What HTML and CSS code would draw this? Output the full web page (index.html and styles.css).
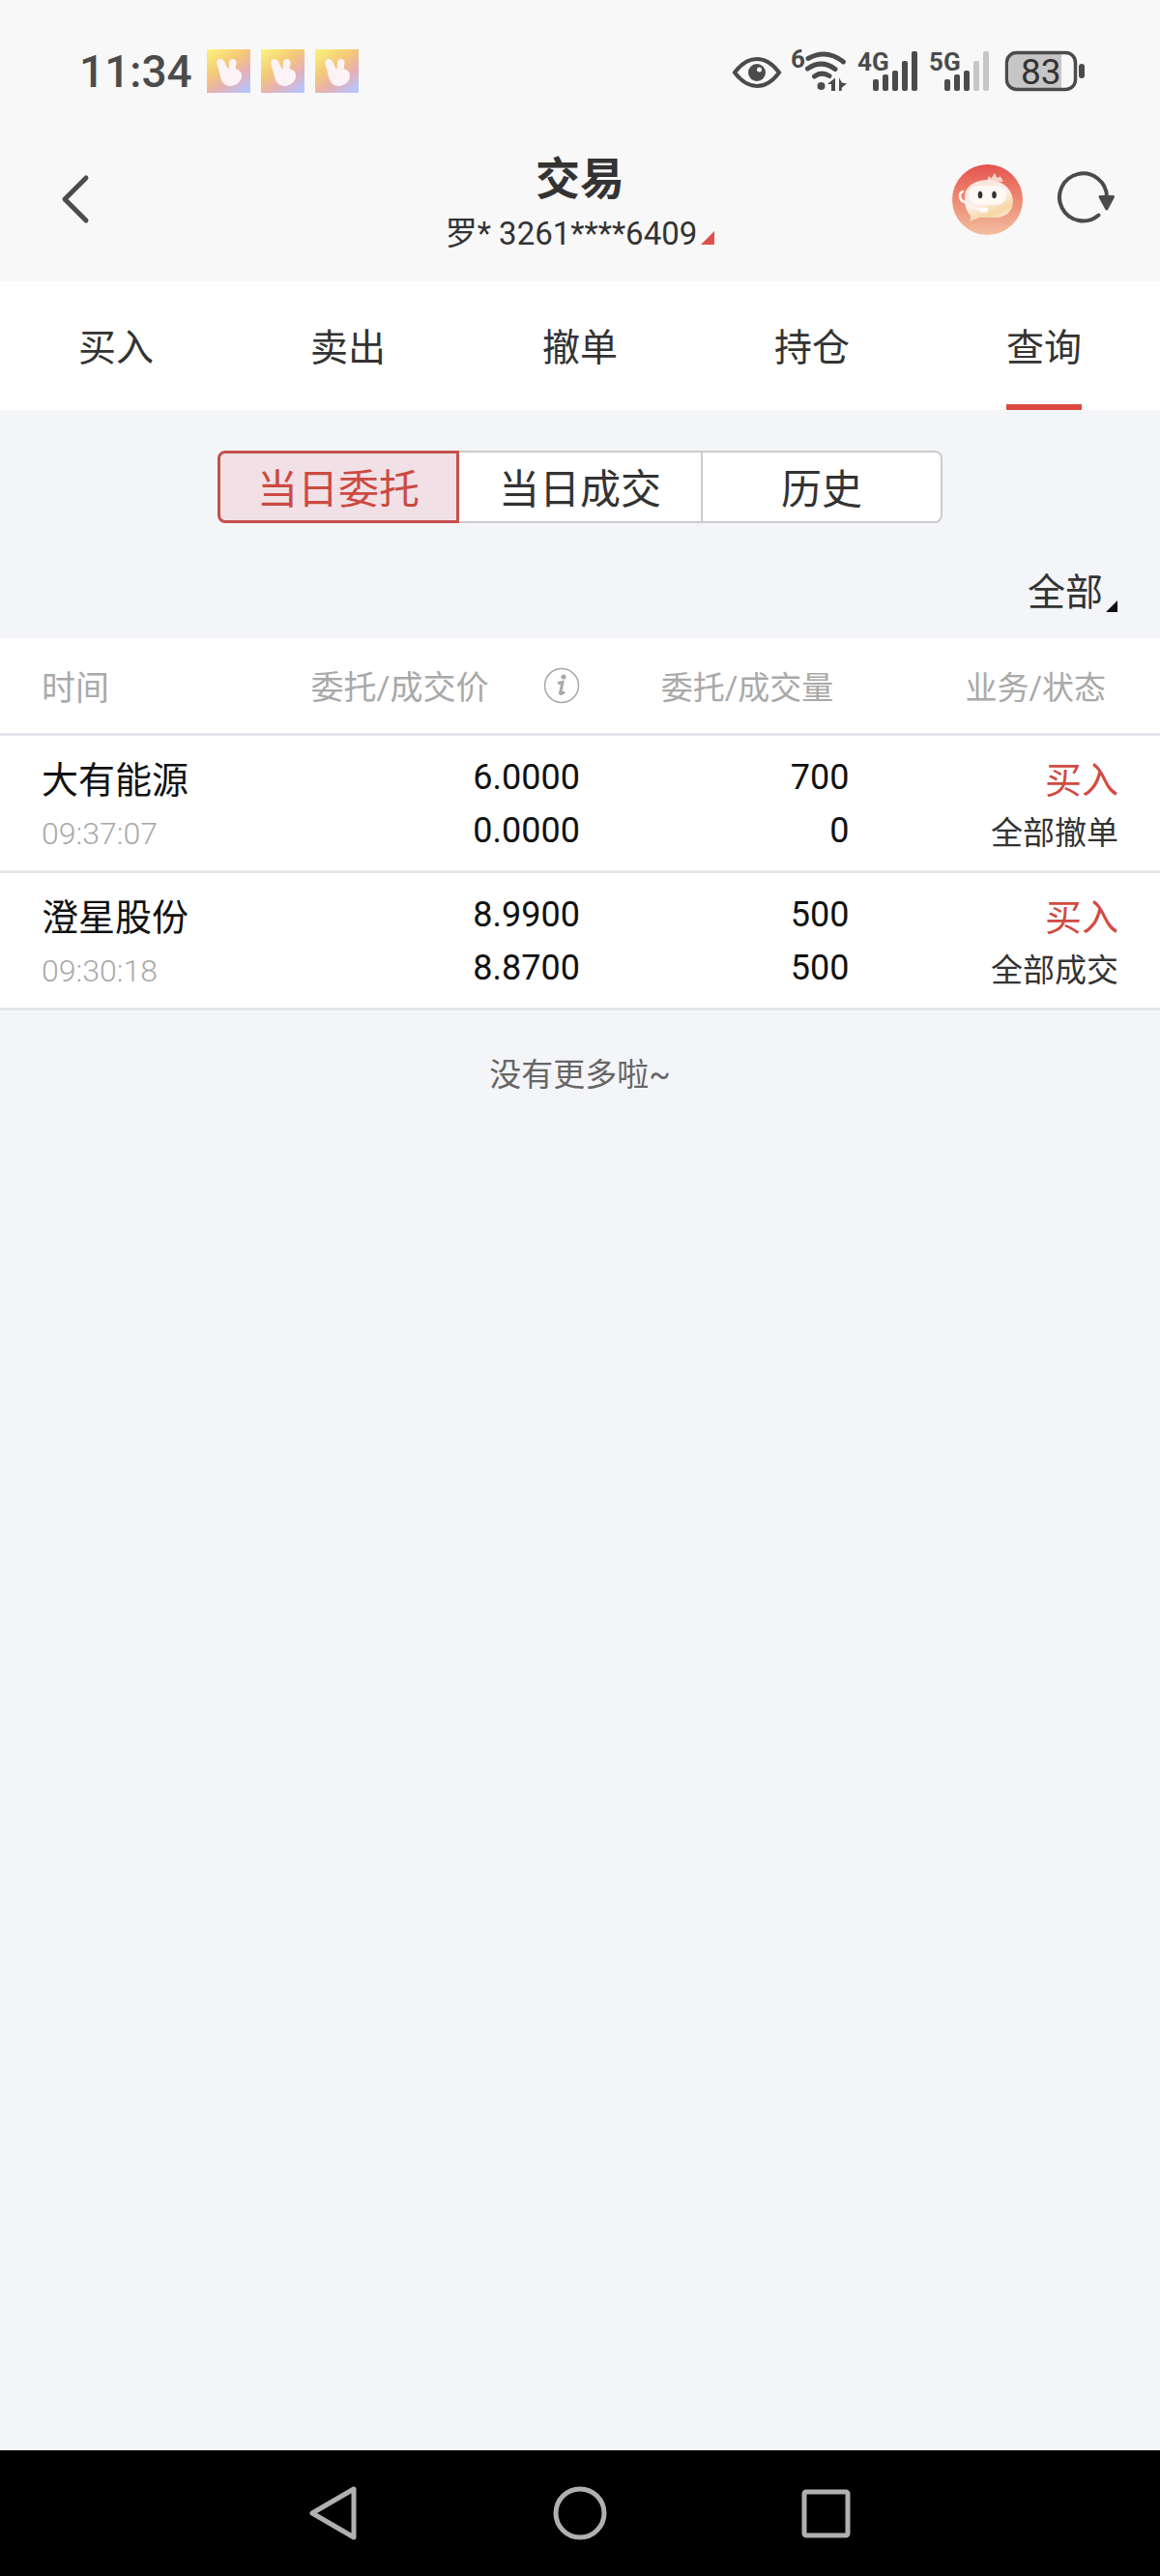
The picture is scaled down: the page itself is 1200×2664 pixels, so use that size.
FILE: index.html
```html
<!DOCTYPE html>
<html lang="zh-CN">
<head>
    <meta charset="UTF-8">
    <meta name="viewport" content="width=device-width, initial-scale=1.0">
    <title>交易</title>
    <link rel="stylesheet" href="styles.css">
</head>
<body>
    <!-- shared shapes -->
    <svg class="defs" width="0" height="0" aria-hidden="true">
        <defs>
            <linearGradient id="rabbit-bg" x1="0.1" y1="0" x2="0.8" y2="1">
                <stop offset="0" stop-color="#fbf07c"/>
                <stop offset="0.4" stop-color="#f4c878"/>
                <stop offset="0.7" stop-color="#e6b0b4"/>
                <stop offset="1" stop-color="#b9c4fb"/>
            </linearGradient>
            <linearGradient id="avatar-bg" x1="0" y1="0" x2="0" y2="1">
                <stop offset="0" stop-color="#e4544f"/>
                <stop offset="0.5" stop-color="#ec8a72"/>
                <stop offset="1" stop-color="#f3bd9f"/>
            </linearGradient>
            <linearGradient id="avatar-body" x1="0.2" y1="0" x2="0.7" y2="1">
                <stop offset="0" stop-color="#fbe3dd"/>
                <stop offset="0.5" stop-color="#fdeee6"/>
                <stop offset="0.8" stop-color="#f6d7a4"/>
                <stop offset="1" stop-color="#fbeadf"/>
            </linearGradient>
            <symbol id="rabbit" viewBox="0 0 45 45">
                <rect width="45" height="45" fill="url(#rabbit-bg)"/>
                <path d="M10.500 15.500C9 9.500 16 8 18 12.500L21.500 20H22.500L23 13C23.500 8.500 31 9 30.500 14L29.500 20.500C34 21 36.500 24 36 28C35.500 34 30 37.500 24.500 38C19.500 38 16 35 14.500 30Z" fill="#fbf3f6"/>
            </symbol>
        </defs>
    </svg>

    <div class="status-bar">
        <div class="status-left">
            <span class="clock">11:34</span>
            <svg class="app-icon"><use href="#rabbit"/></svg>
            <svg class="app-icon"><use href="#rabbit"/></svg>
            <svg class="app-icon"><use href="#rabbit"/></svg>
        </div>
        <div class="status-right">
            <svg width="50" height="46" viewBox="0 0 50 46">
                <path d="M2 24C9 14.500 17 10 25 10S41 14.500 48 24C41 33.500 33 38 25 38S9 33.500 2 24Z" fill="none" stroke="#4b4b4b" stroke-width="4"/>
                <circle cx="25" cy="24" r="9" fill="#4b4b4b"/>
                <circle cx="27.500" cy="21" r="2.500" fill="#f8f8f8"/>
            </svg>
            <svg width="56" height="46" viewBox="0 0 56 46">
                <text class="signal-text" x="-2" y="19">6</text>
                <g fill="none" stroke="#4b4b4b" stroke-width="5" stroke-linecap="round">
                    <path d="M16 9.500Q35 -1 52.500 13"/>
                    <path d="M15.500 20Q30 10 44 20.500"/>
                    <path d="M22.500 28Q30 22.500 38 27.500"/>
                </g>
                <circle cx="29.500" cy="38" r="4" fill="#4b4b4b"/>
                <path d="M36 36L44 29.500V43H40V36ZM48 29.500L48 43H50.500L51 39.500L56 35.500L51 34.500Z" fill="#4b4b4b"/>
            </svg>
            <svg width="62" height="46" viewBox="0 0 62 46">
                <text class="signal-text" x="-1" y="22">4G</text>
                <g fill="#4b4b4b">
                    <rect x="15" y="31" width="6" height="12" rx="2"/>
                    <rect x="25" y="26" width="6" height="17" rx="2"/>
                    <rect x="35" y="22" width="6" height="21" rx="2"/>
                    <rect x="45" y="12" width="6" height="31" rx="2"/>
                    <rect x="55" y="2" width="6" height="41" rx="2"/>
                </g>
            </svg>
            <svg width="62" height="46" viewBox="0 0 62 46">
                <text class="signal-text" x="-1" y="22">5G</text>
                <g fill="#4b4b4b">
                    <rect x="15" y="31" width="6" height="12" rx="2"/>
                    <rect x="25" y="26" width="6" height="17" rx="2"/>
                    <rect x="35" y="22" width="6" height="21" rx="2"/>
                </g>
                <g fill="#c6c6c6">
                    <rect x="45" y="12" width="6" height="31" rx="2"/>
                    <rect x="55" y="2" width="6" height="41" rx="2"/>
                </g>
            </svg>
            <svg width="86" height="46" viewBox="0 0 86 46">
                <path d="M14 5H62V40H14Q8 40 8 33V12Q8 5 14 5Z" fill="#c6c6c6"/>
                <rect x="5.500" y="3.500" width="71" height="38" rx="10" fill="none" stroke="#4b4b4b" stroke-width="3.500"/>
                <rect x="80" y="15" width="6" height="15" rx="3" fill="#4b4b4b"/>
                <text class="battery-text" x="20" y="36">83</text>
            </svg>
        </div>
    </div>

    <header class="header">
        <div class="header-side header-back">
            <button class="icon-button" aria-label="返回">
                <svg width="30" height="52" viewBox="0 0 30 52">
                    <path d="M26 4L4 26L26 48" fill="none" stroke="#4b4b4b" stroke-width="5" stroke-linecap="round" stroke-linejoin="round"/>
                </svg>
            </button>
        </div>
        <div class="header-title">
            <h1>交易</h1>
            <button class="account">罗* 3261****6409<svg width="14" height="14" viewBox="0 0 14 14"><path d="M14 0V14H0Z" fill="#e0514c"/></svg></button>
        </div>
        <div class="header-side header-actions">
            <button class="icon-button" aria-label="客服">
                <svg width="73" height="73" viewBox="0 0 73 73">
                    <circle cx="36.500" cy="36.500" r="36.500" fill="url(#avatar-bg)"/>
                    <path d="M36 17L38 12L40.500 14.500L44 9L46.500 14L50 12.500L53 18Z" fill="#fbd3ca"/>
                    <path d="M13 36C12 24 21 17 36 16C51 16 62 24 63 38C63 48 56 55 44 55H28C25 56 22 58 18 59C19 57 19.500 55 19 53C15 49 13 43 13 36Z" fill="url(#avatar-body)"/>
                    <rect x="17" y="22" width="39" height="20" rx="10" fill="#fff8f5"/>
                    <ellipse cx="29" cy="31.500" rx="2.300" ry="3.800" fill="#333"/>
                    <ellipse cx="43.500" cy="31.500" rx="2.300" ry="3.800" fill="#333"/>
                    <path d="M11 28C6 30 8 38 13 39C17 43 24 46 31 47" fill="none" stroke="#fff4ef" stroke-width="2.500" stroke-linecap="round"/>
                    <rect x="28" y="44.500" width="9" height="5" rx="2.500" fill="#fff"/>
                </svg>
            </button>
            <button class="icon-button" aria-label="刷新">
                <svg width="60" height="56" viewBox="0 0 60 56">
                    <path d="M42.500 44.500A24.500 24.500 0 1 1 51 26" fill="none" stroke="#4b4b4b" stroke-width="4" stroke-linecap="round"/>
                    <path d="M44 25.500H57.500L50.800 38Z" fill="#4b4b4b" stroke="#4b4b4b" stroke-width="3" stroke-linejoin="round"/>
                </svg>
            </button>
        </div>
    </header>

    <nav class="tabs">
        <a href="#" class="tab">买入</a>
        <a href="#" class="tab">卖出</a>
        <a href="#" class="tab">撤单</a>
        <a href="#" class="tab">持仓</a>
        <a href="#" class="tab active">查询</a>
    </nav>

    <main>
        <div class="segments">
            <button class="segment active">当日委托</button>
            <button class="segment">当日成交</button>
            <button class="segment">历史</button>
        </div>

        <div class="filter">
            <select aria-label="筛选">
                <option>全部</option>
            </select>
            <svg width="12" height="12" viewBox="0 0 12 12"><path d="M12 0V12H0Z" fill="#111"/></svg>
        </div>

        <table class="orders">
            <thead>
                <tr>
                    <th class="col-name">时间</th>
                    <th class="col-price">
                        <div class="price-head">
                            委托/成交价
                            <button class="icon-button" aria-label="说明">
                                <svg width="38" height="38" viewBox="0 0 38 38">
                                    <circle cx="19" cy="19" r="17.500" fill="none" stroke="#a9a9a9" stroke-width="1.500"/>
                                    <circle cx="21" cy="10" r="2.600" fill="#a9a9a9"/>
                                    <path d="M15 16.500L20 15.500L17.500 27Q18 28.500 22 25.500" fill="none" stroke="#a9a9a9" stroke-width="3"/>
                                </svg>
                            </button>
                        </div>
                    </th>
                    <th class="col-amount">委托/成交量</th>
                    <th class="col-state">业务/状态</th>
                </tr>
            </thead>
            <tbody>
                <tr>
                    <td><div class="name">大有能源</div><div class="time">09:37:07</div></td>
                    <td><div class="number">6.0000</div><div class="number">0.0000</div></td>
                    <td><div class="number">700</div><div class="number">0</div></td>
                    <td><div class="side">买入</div><div class="state">全部撤单</div></td>
                </tr>
                <tr>
                    <td><div class="name">澄星股份</div><div class="time">09:30:18</div></td>
                    <td><div class="number">8.9900</div><div class="number">8.8700</div></td>
                    <td><div class="number">500</div><div class="number">500</div></td>
                    <td><div class="side">买入</div><div class="state">全部成交</div></td>
                </tr>
            </tbody>
        </table>

        <p class="no-more">没有更多啦~</p>
    </main>

    <div class="system-nav">
        <button class="icon-button" aria-label="后退">
            <svg width="60" height="60" viewBox="0 0 60 60"><path d="M51 5V55L8 30Z" fill="none" stroke="#b0b0b0" stroke-width="5" stroke-linejoin="round"/></svg>
        </button>
        <button class="icon-button" aria-label="主页">
            <svg width="60" height="60" viewBox="0 0 60 60"><circle cx="30" cy="30" r="25" fill="none" stroke="#b0b0b0" stroke-width="5"/></svg>
        </button>
        <button class="icon-button" aria-label="最近任务">
            <svg width="60" height="60" viewBox="0 0 60 60"><rect x="7" y="8" width="45" height="45" rx="2" fill="none" stroke="#b0b0b0" stroke-width="5"/></svg>
        </button>
    </div>
</body>
</html>
```

FILE: styles.css
```css
* {
    box-sizing: border-box;
}

body {
    display: flex;
    flex-direction: column;
    min-height: 100vh;
    margin: 0;
    background-color: #f4f5f9;
    color: #333;
    font-family: Roboto, "Noto Sans CJK SC", sans-serif;
}

button,
select {
    margin: 0;
    padding: 0;
    border: none;
    background: none;
    color: inherit;
    font-family: inherit;
    cursor: pointer;
}

svg {
    display: block;
    flex: none;
    overflow: visible;
}

.defs {
    position: absolute;
}

/* Phone status bar */
.status-bar {
    display: flex;
    justify-content: space-between;
    align-items: center;
    height: 147px;
    padding: 0 78px 0 82px;
    background-color: #f8f8f8;
}

.status-left {
    display: flex;
    align-items: center;
    gap: 11px;
}

.status-right {
    display: flex;
    align-items: center;
    gap: 12px;
}

.clock {
    margin-right: 4px;
    color: #4b4b4b;
    font-size: 46px;
    font-weight: 500;
}

.app-icon {
    width: 45px;
    height: 45px;
}

.signal-text {
    fill: #4b4b4b;
    font-size: 26px;
    font-weight: 700;
}

.battery-text {
    fill: #333;
    font-size: 37px;
    font-weight: 400;
}

/* Page header */
.header {
    display: grid;
    grid-template-columns: 1fr auto 1fr;
    align-items: start;
    padding: 8px 46px 22px;
    background-color: #f8f8f8;
}

.header-side {
    display: flex;
    align-items: center;
    height: 102px;
}

.header-back {
    padding-left: 17px;
}

.header-actions {
    justify-content: flex-end;
    gap: 36px;
}

.header-title {
    display: flex;
    flex-direction: column;
    align-items: center;
}

.header-title h1 {
    margin: 0;
    font-size: 46px;
    font-weight: 700;
    line-height: 60px;
}

.account {
    display: flex;
    align-items: center;
    gap: 4px;
    font-size: 33px;
    line-height: 54px;
}

.account svg {
    margin-top: 8px;
}

/* Main tabs */
.tabs {
    display: flex;
    background-color: #fff;
}

.tab {
    display: flex;
    flex: 1;
    justify-content: center;
    padding-top: 5px;
    color: #333;
    font-size: 39px;
    line-height: 128px;
    text-decoration: none;
}

.tab.active {
    background: linear-gradient(#dc4840, #dc4840) center bottom / 78px 6px no-repeat;
}

/* Today / history switch */
.segments {
    display: grid;
    grid-template-columns: repeat(3, 1fr);
    padding: 42px 225px 0;
}

.segment {
    height: 75px;
    padding-bottom: 3px;
    border: 2px solid #ccc;
    border-left-width: 0;
    background-color: #fff;
    font-size: 42px;
}

.segment:last-child {
    border-left-width: 2px;
    border-radius: 0 8px 8px 0;
}

.segment:nth-child(2) {
    border-right-width: 0;
}

.segment.active {
    border: 3px solid #c4504b;
    border-radius: 8px 0 0 8px;
    background-color: #f1e1e6;
    color: #cc4a42;
}

.filter {
    display: flex;
    justify-content: flex-end;
    align-items: center;
    gap: 2px;
    padding: 42px 44px 17px;
}

.filter select {
    height: 60px;
    appearance: none;
    font-size: 39px;
}

.filter svg {
    margin-top: 28px;
}

/* Order list */
.orders {
    width: 100%;
    border-collapse: collapse;
    table-layout: fixed;
    background-color: #fff;
    text-align: right;
}

.orders tr {
    border-bottom: 3px solid #e4e5ea;
}

.orders th {
    height: 99px;
    padding: 0 16px 0 0;
    color: #a9a9a9;
    font-size: 33px;
    font-weight: 400;
}

.orders td {
    padding: 16px 0 13px;
    color: #111;
    line-height: 55px;
}

.orders .col-name {
    width: 26.8%;
    font-size: 35px;
    text-align: left;
}

.orders .col-price {
    width: 23.2%;
    padding-right: 0;
    font-size: 34px;
}

.orders .col-amount {
    width: 23.2%;
}

.orders .col-state {
    width: 26.8%;
    padding-right: 56px;
}

.price-head {
    display: flex;
    justify-content: space-between;
    align-items: center;
}

.orders th:first-child,
.orders td:first-child {
    padding-left: 43px;
    text-align: left;
}

.orders td:last-child {
    padding-right: 43px;
}

.name,
.side {
    font-size: 38px;
    line-height: 60px;
}

.side {
    color: #d24a43;
}

.number {
    font-size: 36px;
}

.time,
.state {
    line-height: 50px;
}

.time {
    color: #a9a9a9;
    font-size: 32px;
    font-weight: 300;
}

.state {
    color: #333;
    font-size: 33px;
}

.no-more {
    margin: 40px 0;
    color: #666;
    font-size: 33px;
    line-height: 54px;
    text-align: center;
}

/* Android navigation */
.system-nav {
    display: flex;
    justify-content: center;
    align-items: center;
    gap: 195px;
    height: 130px;
    margin-top: auto;
    background-color: #000;
}
```
